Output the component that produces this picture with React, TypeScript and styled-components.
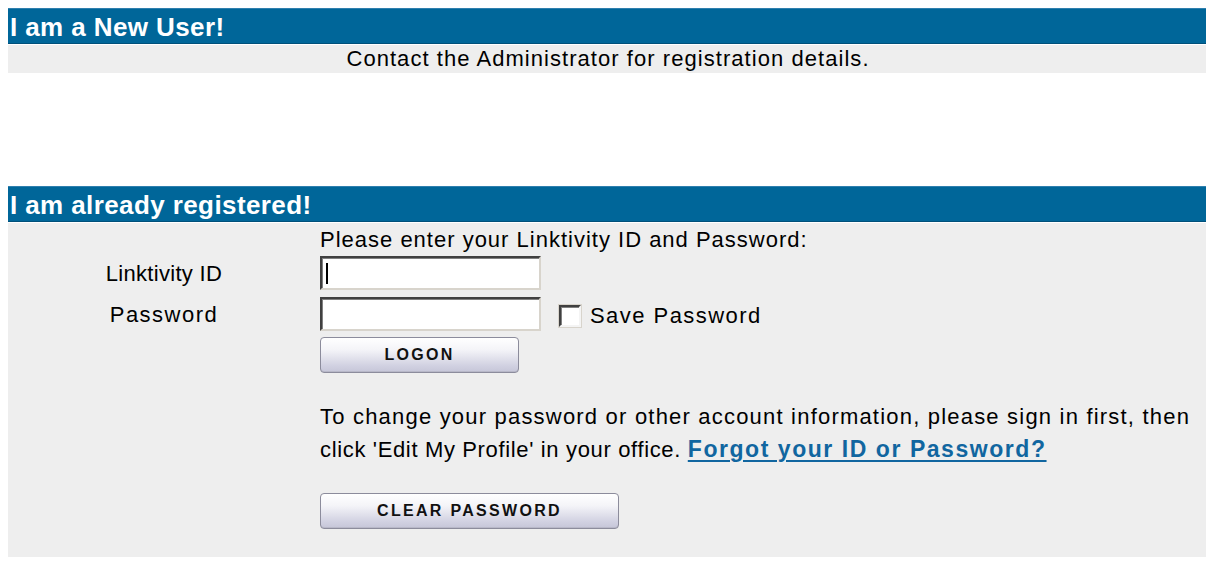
import React from "react";
import styled, { createGlobalStyle } from "styled-components";

const GlobalStyle = createGlobalStyle`
  html, body { background: #ffffff; }
  body {
    margin: 8px;
    font-family: "Liberation Sans", Arial, sans-serif;
    color: #000;
  }
`;

const Page = styled.div`
  width: 1200px;
  display: flex;
  flex-direction: column;
`;

const Section = styled.section<{ $top?: number }>`
  display: flex;
  flex-direction: column;
  gap: 1px;
  margin-top: ${(p) => p.$top ?? 0}px;
`;

const HeaderBar = styled.h2`
  margin: 0;
  height: 36px;
  line-height: 38px;
  padding-left: 2px;
  background: #006699;
  box-shadow: inset 0 1px 0 #2f7fae, inset 0 -1px 0 #00507a;
  color: #ffffff;
  font-family: "Liberation Sans", Arial, sans-serif;
  font-weight: 700;
  font-size: 26px;
  letter-spacing: 0.4px;
  white-space: nowrap;
`;

const NoticeRow = styled.div`
  height: 28px;
  line-height: 28px;
  background: #eeeeee;
  text-align: center;
  font-size: 22px;
  letter-spacing: 1.05px;
`;

const LoginPanel = styled.div`
  background: #eeeeee;
  display: flex;
  flex-direction: column;
  padding-bottom: 28px;
`;

const FormRow = styled.div<{ $h: number; $top?: number }>`
  display: grid;
  grid-template-columns: 312px 1fr;
  align-items: center;
  height: ${(p) => p.$h}px;
  margin-top: ${(p) => p.$top ?? 0}px;
`;

const Label = styled.label<{ $spacing?: number }>`
  text-align: center;
  font-size: 22px;
  letter-spacing: ${(p) => p.$spacing ?? 0.5}px;
  line-height: 26px;
  padding-top: 2px;
`;

const Cell = styled.div`
  grid-column: 2;
  display: flex;
  align-items: center;
  font-size: 22px;
  letter-spacing: 1px;
`;

const InputBox = styled.div`
  position: relative;
  width: 221px;
  height: 34px;
  box-sizing: border-box;
`;

const TextInput = styled.input`
  width: 100%;
  height: 100%;
  box-sizing: border-box;
  margin: 0;
  padding: 0 4px;
  background: #ffffff;
  border-style: solid;
  border-width: 2px;
  border-color: #404040 #d8d4cc #d8d4cc #404040;
  box-shadow: inset 1px 1px 0 #808080;
  font-size: 20px;
  font-family: "Liberation Sans", Arial, sans-serif;
  outline: none;
`;

const Caret = styled.span`
  position: absolute;
  left: 6px;
  top: 7px;
  width: 2px;
  height: 21px;
  background: #000;
`;

const CheckLabel = styled.label`
  display: flex;
  align-items: center;
  margin-left: 18px;
  gap: 9px;
  font-size: 22px;
  letter-spacing: 1.45px;
  padding-top: 4px;
`;

const CheckBox = styled.span`
  display: inline-block;
  width: 22px;
  height: 22px;
  box-sizing: border-box;
  background: #ffffff;
  border-style: solid;
  border-width: 2px;
  border-color: #404040 #f4f4f4 #f4f4f4 #404040;
  box-shadow: inset 1px 1px 0 #808080, 0 0 0 1px #d8d4cc;
`;

const Button = styled.button<{ $w: number }>`
  width: ${(p) => p.$w}px;
  height: 36px;
  box-sizing: border-box;
  margin: 0;
  padding: 0;
  border: 1px solid #8c8c9c;
  border-radius: 4px;
  background: linear-gradient(#ffffff 0%, #f4f4f8 35%, #d2d2e2 80%, #c6c6d8 100%);
  box-shadow: inset 0 -1px 0 #b8b8c8;
  font-family: "Liberation Sans", Arial, sans-serif;
  font-weight: 700;
  font-size: 16px;
  letter-spacing: 2.3px;
  color: #111;
  cursor: pointer;
`;

const Paragraph = styled.p`
  margin: 0;
  font-size: 22px;
  line-height: 32px;
  white-space: nowrap;
`;

const Line = styled.span<{ $spacing: number }>`
  letter-spacing: ${(p) => p.$spacing}px;
`;

const HelpLink = styled.a`
  color: #1166a0;
  font-weight: 700;
  font-size: 23px;
  letter-spacing: 1.55px;
  text-decoration: underline;
  text-underline-offset: 3px;
`;

export default function App() {
  return (
    <>
      <GlobalStyle />
      <Page>
        <Section>
          <HeaderBar>I am a New User!</HeaderBar>
          <NoticeRow>Contact the Administrator for registration details.</NoticeRow>
        </Section>

        <Section $top={113}>
          <HeaderBar>I am already registered!</HeaderBar>
          <LoginPanel>
            <FormRow $h={33}>
              <Cell>Please enter your Linktivity ID and Password:</Cell>
            </FormRow>
            <FormRow $h={34}>
              <Label $spacing={0.3}>Linktivity ID</Label>
              <Cell>
                <InputBox>
                  <TextInput type="text" />
                  <Caret />
                </InputBox>
              </Cell>
            </FormRow>
            <FormRow $h={34} $top={7}>
              <Label $spacing={1.5}>Password</Label>
              <Cell>
                <InputBox>
                  <TextInput type="password" />
                </InputBox>
                <CheckLabel>
                  <CheckBox />
                  Save Password
                </CheckLabel>
              </Cell>
            </FormRow>
            <FormRow $h={36} $top={6}>
              <Cell>
                <Button $w={199}>LOGON</Button>
              </Cell>
            </FormRow>
            <FormRow $h={64} $top={28}>
              <Cell>
                <Paragraph>
                  <Line $spacing={1.2}>
                    To change your password or other account information, please sign in first, then
                  </Line>
                  <br />
                  <Line $spacing={0.65}>click 'Edit My Profile' in your office. </Line>
                  <HelpLink href="#">Forgot your ID or Password?</HelpLink>
                </Paragraph>
              </Cell>
            </FormRow>
            <FormRow $h={36} $top={28}>
              <Cell>
                <Button $w={299}>CLEAR PASSWORD</Button>
              </Cell>
            </FormRow>
          </LoginPanel>
        </Section>
      </Page>
    </>
  );
}
